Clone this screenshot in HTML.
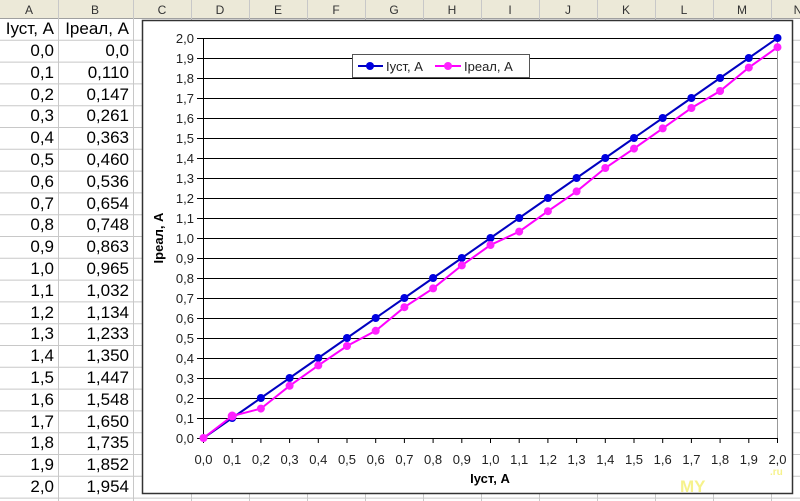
<!DOCTYPE html>
<html><head><meta charset="utf-8"><style>
html,body{margin:0;padding:0;background:#fff;}
svg{display:block;font-family:"Liberation Sans",Arial,sans-serif;}
</style></head><body>
<svg width="800" height="501" xmlns="http://www.w3.org/2000/svg">
<rect x="0" y="0" width="800" height="18" fill="#ece9d8"/>
<g stroke="#c8c8c8" stroke-width="1">
<line x1="0" y1="18.5" x2="800" y2="18.5" stroke="#a0a0a0"/>
<line x1="0" y1="40.3" x2="800" y2="40.3"/><line x1="0" y1="62.1" x2="800" y2="62.1"/><line x1="0" y1="83.9" x2="800" y2="83.9"/><line x1="0" y1="105.7" x2="800" y2="105.7"/><line x1="0" y1="127.5" x2="800" y2="127.5"/><line x1="0" y1="149.3" x2="800" y2="149.3"/><line x1="0" y1="171.1" x2="800" y2="171.1"/><line x1="0" y1="192.9" x2="800" y2="192.9"/><line x1="0" y1="214.7" x2="800" y2="214.7"/><line x1="0" y1="236.5" x2="800" y2="236.5"/><line x1="0" y1="258.3" x2="800" y2="258.3"/><line x1="0" y1="280.1" x2="800" y2="280.1"/><line x1="0" y1="301.9" x2="800" y2="301.9"/><line x1="0" y1="323.7" x2="800" y2="323.7"/><line x1="0" y1="345.5" x2="800" y2="345.5"/><line x1="0" y1="367.3" x2="800" y2="367.3"/><line x1="0" y1="389.1" x2="800" y2="389.1"/><line x1="0" y1="410.9" x2="800" y2="410.9"/><line x1="0" y1="432.7" x2="800" y2="432.7"/><line x1="0" y1="454.5" x2="800" y2="454.5"/><line x1="0" y1="476.3" x2="800" y2="476.3"/><line x1="0" y1="498.1" x2="800" y2="498.1"/>
<line x1="58.5" y1="0" x2="58.5" y2="501"/><line x1="133.5" y1="0" x2="133.5" y2="501"/><line x1="191.5" y1="0" x2="191.5" y2="501"/><line x1="249.5" y1="0" x2="249.5" y2="501"/><line x1="307.5" y1="0" x2="307.5" y2="501"/><line x1="365.5" y1="0" x2="365.5" y2="501"/><line x1="423.5" y1="0" x2="423.5" y2="501"/><line x1="481.5" y1="0" x2="481.5" y2="501"/><line x1="539.5" y1="0" x2="539.5" y2="501"/><line x1="597.5" y1="0" x2="597.5" y2="501"/><line x1="655.5" y1="0" x2="655.5" y2="501"/><line x1="713.5" y1="0" x2="713.5" y2="501"/><line x1="771.5" y1="0" x2="771.5" y2="501"/>
</g>
<g font-size="12" fill="#333" text-anchor="middle">
<text x="29" y="14">A</text><text x="95" y="14">B</text><text x="162" y="14">C</text><text x="220" y="14">D</text><text x="278" y="14">E</text><text x="336" y="14">F</text><text x="394" y="14">G</text><text x="452" y="14">H</text><text x="510" y="14">I</text><text x="568" y="14">J</text><text x="626" y="14">K</text><text x="684" y="14">L</text><text x="742" y="14">M</text><text x="798" y="14">N</text>
</g>
<g font-size="17" fill="#000" text-anchor="end">
<text x="54" y="34">Iуст, А</text><text x="129" y="34">Iреал, А</text>
<text x="54" y="56">0,0</text><text x="129" y="56">0,0</text>
<text x="54" y="78">0,1</text><text x="129" y="78">0,110</text>
<text x="54" y="100">0,2</text><text x="129" y="100">0,147</text>
<text x="54" y="121">0,3</text><text x="129" y="121">0,261</text>
<text x="54" y="143">0,4</text><text x="129" y="143">0,363</text>
<text x="54" y="165">0,5</text><text x="129" y="165">0,460</text>
<text x="54" y="187">0,6</text><text x="129" y="187">0,536</text>
<text x="54" y="209">0,7</text><text x="129" y="209">0,654</text>
<text x="54" y="230">0,8</text><text x="129" y="230">0,748</text>
<text x="54" y="252">0,9</text><text x="129" y="252">0,863</text>
<text x="54" y="274">1,0</text><text x="129" y="274">0,965</text>
<text x="54" y="296">1,1</text><text x="129" y="296">1,032</text>
<text x="54" y="318">1,2</text><text x="129" y="318">1,134</text>
<text x="54" y="339">1,3</text><text x="129" y="339">1,233</text>
<text x="54" y="361">1,4</text><text x="129" y="361">1,350</text>
<text x="54" y="383">1,5</text><text x="129" y="383">1,447</text>
<text x="54" y="405">1,6</text><text x="129" y="405">1,548</text>
<text x="54" y="427">1,7</text><text x="129" y="427">1,650</text>
<text x="54" y="448">1,8</text><text x="129" y="448">1,735</text>
<text x="54" y="470">1,9</text><text x="129" y="470">1,852</text>
<text x="54" y="492">2,0</text><text x="129" y="492">1,954</text>
</g>
<rect x="142.5" y="20.5" width="650" height="473" fill="#fff" stroke="#333" stroke-width="1.5"/>
<g stroke="#000" stroke-width="1">
<line x1="197" y1="38.5" x2="777" y2="38.5"/><line x1="197" y1="58.5" x2="777" y2="58.5"/><line x1="197" y1="78.5" x2="777" y2="78.5"/><line x1="197" y1="98.5" x2="777" y2="98.5"/><line x1="197" y1="118.5" x2="777" y2="118.5"/><line x1="197" y1="138.5" x2="777" y2="138.5"/><line x1="197" y1="158.5" x2="777" y2="158.5"/><line x1="197" y1="178.5" x2="777" y2="178.5"/><line x1="197" y1="198.5" x2="777" y2="198.5"/><line x1="197" y1="218.5" x2="777" y2="218.5"/><line x1="197" y1="238.5" x2="777" y2="238.5"/><line x1="197" y1="258.5" x2="777" y2="258.5"/><line x1="197" y1="278.5" x2="777" y2="278.5"/><line x1="197" y1="298.5" x2="777" y2="298.5"/><line x1="197" y1="318.5" x2="777" y2="318.5"/><line x1="197" y1="338.5" x2="777" y2="338.5"/><line x1="197" y1="358.5" x2="777" y2="358.5"/><line x1="197" y1="378.5" x2="777" y2="378.5"/><line x1="197" y1="398.5" x2="777" y2="398.5"/><line x1="197" y1="418.5" x2="777" y2="418.5"/>
<line x1="203.5" y1="38" x2="203.5" y2="438"/>
<line x1="777.5" y1="38" x2="777.5" y2="438" stroke="#999"/>
<line x1="197" y1="438.5" x2="777" y2="438.5"/>
<path d="M203.5 438v5M232.2 438v5M260.9 438v5M289.6 438v5M318.3 438v5M347 438v5M375.7 438v5M404.4 438v5M433.1 438v5M461.8 438v5M490.5 438v5M519.2 438v5M547.9 438v5M576.6 438v5M605.3 438v5M634 438v5M662.7 438v5M691.4 438v5M720.1 438v5M748.8 438v5M777.5 438v5"/>
</g>
<g font-size="13" fill="#222" text-anchor="end">
<text x="194" y="43">2,0</text><text x="194" y="63">1,9</text><text x="194" y="83">1,8</text><text x="194" y="103">1,7</text><text x="194" y="123">1,6</text><text x="194" y="143">1,5</text><text x="194" y="163">1,4</text><text x="194" y="183">1,3</text><text x="194" y="203">1,2</text><text x="194" y="223">1,1</text><text x="194" y="243">1,0</text><text x="194" y="263">0,9</text><text x="194" y="283">0,8</text><text x="194" y="303">0,7</text><text x="194" y="323">0,6</text><text x="194" y="343">0,5</text><text x="194" y="363">0,4</text><text x="194" y="383">0,3</text><text x="194" y="403">0,2</text><text x="194" y="423">0,1</text><text x="194" y="443">0,0</text>
</g>
<g font-size="13" fill="#222" text-anchor="middle">
<text x="203.5" y="464">0,0</text><text x="232.2" y="464">0,1</text><text x="260.9" y="464">0,2</text><text x="289.6" y="464">0,3</text><text x="318.3" y="464">0,4</text><text x="347" y="464">0,5</text><text x="375.7" y="464">0,6</text><text x="404.4" y="464">0,7</text><text x="433.1" y="464">0,8</text><text x="461.8" y="464">0,9</text><text x="490.5" y="464">1,0</text><text x="519.2" y="464">1,1</text><text x="547.9" y="464">1,2</text><text x="576.6" y="464">1,3</text><text x="605.3" y="464">1,4</text><text x="634" y="464">1,5</text><text x="662.7" y="464">1,6</text><text x="691.4" y="464">1,7</text><text x="720.1" y="464">1,8</text><text x="748.8" y="464">1,9</text><text x="777.5" y="464">2,0</text>
</g>
<text x="490" y="483" font-size="13" font-weight="bold" text-anchor="middle">Iуст, А</text>
<text transform="translate(163,238) rotate(-90)" font-size="13" font-weight="bold" text-anchor="middle">Iреал, А</text>
<polyline fill="none" stroke="#0000c0" stroke-width="2" points="203.5,438 232.2,418 260.9,398 289.6,378 318.3,358 347,338 375.7,318 404.4,298 433.1,278 461.8,258 490.5,238 519.2,218 547.9,198 576.6,178 605.3,158 634,138 662.7,118 691.4,98 720.1,78 748.8,58 777.5,38"/>
<g fill="#0000e0">
<circle cx="232.2" cy="418" r="4"/><circle cx="260.9" cy="398" r="4"/><circle cx="289.6" cy="378" r="4"/><circle cx="318.3" cy="358" r="4"/><circle cx="347" cy="338" r="4"/><circle cx="375.7" cy="318" r="4"/><circle cx="404.4" cy="298" r="4"/><circle cx="433.1" cy="278" r="4"/><circle cx="461.8" cy="258" r="4"/><circle cx="490.5" cy="238" r="4"/><circle cx="519.2" cy="218" r="4"/><circle cx="547.9" cy="198" r="4"/><circle cx="576.6" cy="178" r="4"/><circle cx="605.3" cy="158" r="4"/><circle cx="634" cy="138" r="4"/><circle cx="662.7" cy="118" r="4"/><circle cx="691.4" cy="98" r="4"/><circle cx="720.1" cy="78" r="4"/><circle cx="748.8" cy="58" r="4"/><circle cx="777.5" cy="38" r="4"/>
</g>
<polyline fill="none" stroke="#ff00ff" stroke-width="2" points="203.5,438 232.2,416 260.9,408.6 289.6,385.8 318.3,365.4 347,346 375.7,330.8 404.4,307.2 433.1,288.4 461.8,265.4 490.5,245 519.2,231.6 547.9,211.2 576.6,191.4 605.3,168 634,148.6 662.7,128.4 691.4,108 720.1,91 748.8,67.6 777.5,47.2"/>
<g fill="#ff22ff">
<circle cx="203.5" cy="438" r="4"/><circle cx="232.2" cy="416" r="4.5"/><circle cx="260.9" cy="408.6" r="4"/><circle cx="289.6" cy="385.8" r="4"/><circle cx="318.3" cy="365.4" r="4"/><circle cx="347" cy="346" r="4"/><circle cx="375.7" cy="330.8" r="4"/><circle cx="404.4" cy="307.2" r="4"/><circle cx="433.1" cy="288.4" r="4"/><circle cx="461.8" cy="265.4" r="4"/><circle cx="490.5" cy="245" r="4"/><circle cx="519.2" cy="231.6" r="4"/><circle cx="547.9" cy="211.2" r="4"/><circle cx="576.6" cy="191.4" r="4"/><circle cx="605.3" cy="168" r="4"/><circle cx="634" cy="148.6" r="4"/><circle cx="662.7" cy="128.4" r="4"/><circle cx="691.4" cy="108" r="4"/><circle cx="720.1" cy="91" r="4"/><circle cx="748.8" cy="67.6" r="4"/><circle cx="777.5" cy="47.2" r="4"/>
</g>
<rect x="352.5" y="54.5" width="177" height="23" fill="#fff" stroke="#555" stroke-width="1"/>
<line x1="358" y1="66" x2="383" y2="66" stroke="#0000c0" stroke-width="2"/>
<circle cx="370" cy="66" r="4" fill="#0000e0"/>
<text x="386" y="71" font-size="13" fill="#222">Iуст, А</text>
<line x1="435" y1="66" x2="461" y2="66" stroke="#ff00ff" stroke-width="2"/>
<circle cx="448" cy="66" r="4" fill="#ff22ff"/>
<text x="464" y="71" font-size="13" fill="#222">Iреал, А</text>
<text x="680" y="492" font-size="17" font-weight="bold" fill="#f4f070" opacity="0.8">MY</text>
<text x="770" y="475" font-size="10" font-weight="bold" fill="#f4f070" opacity="0.8">.ru</text>
</svg>
</body></html>
